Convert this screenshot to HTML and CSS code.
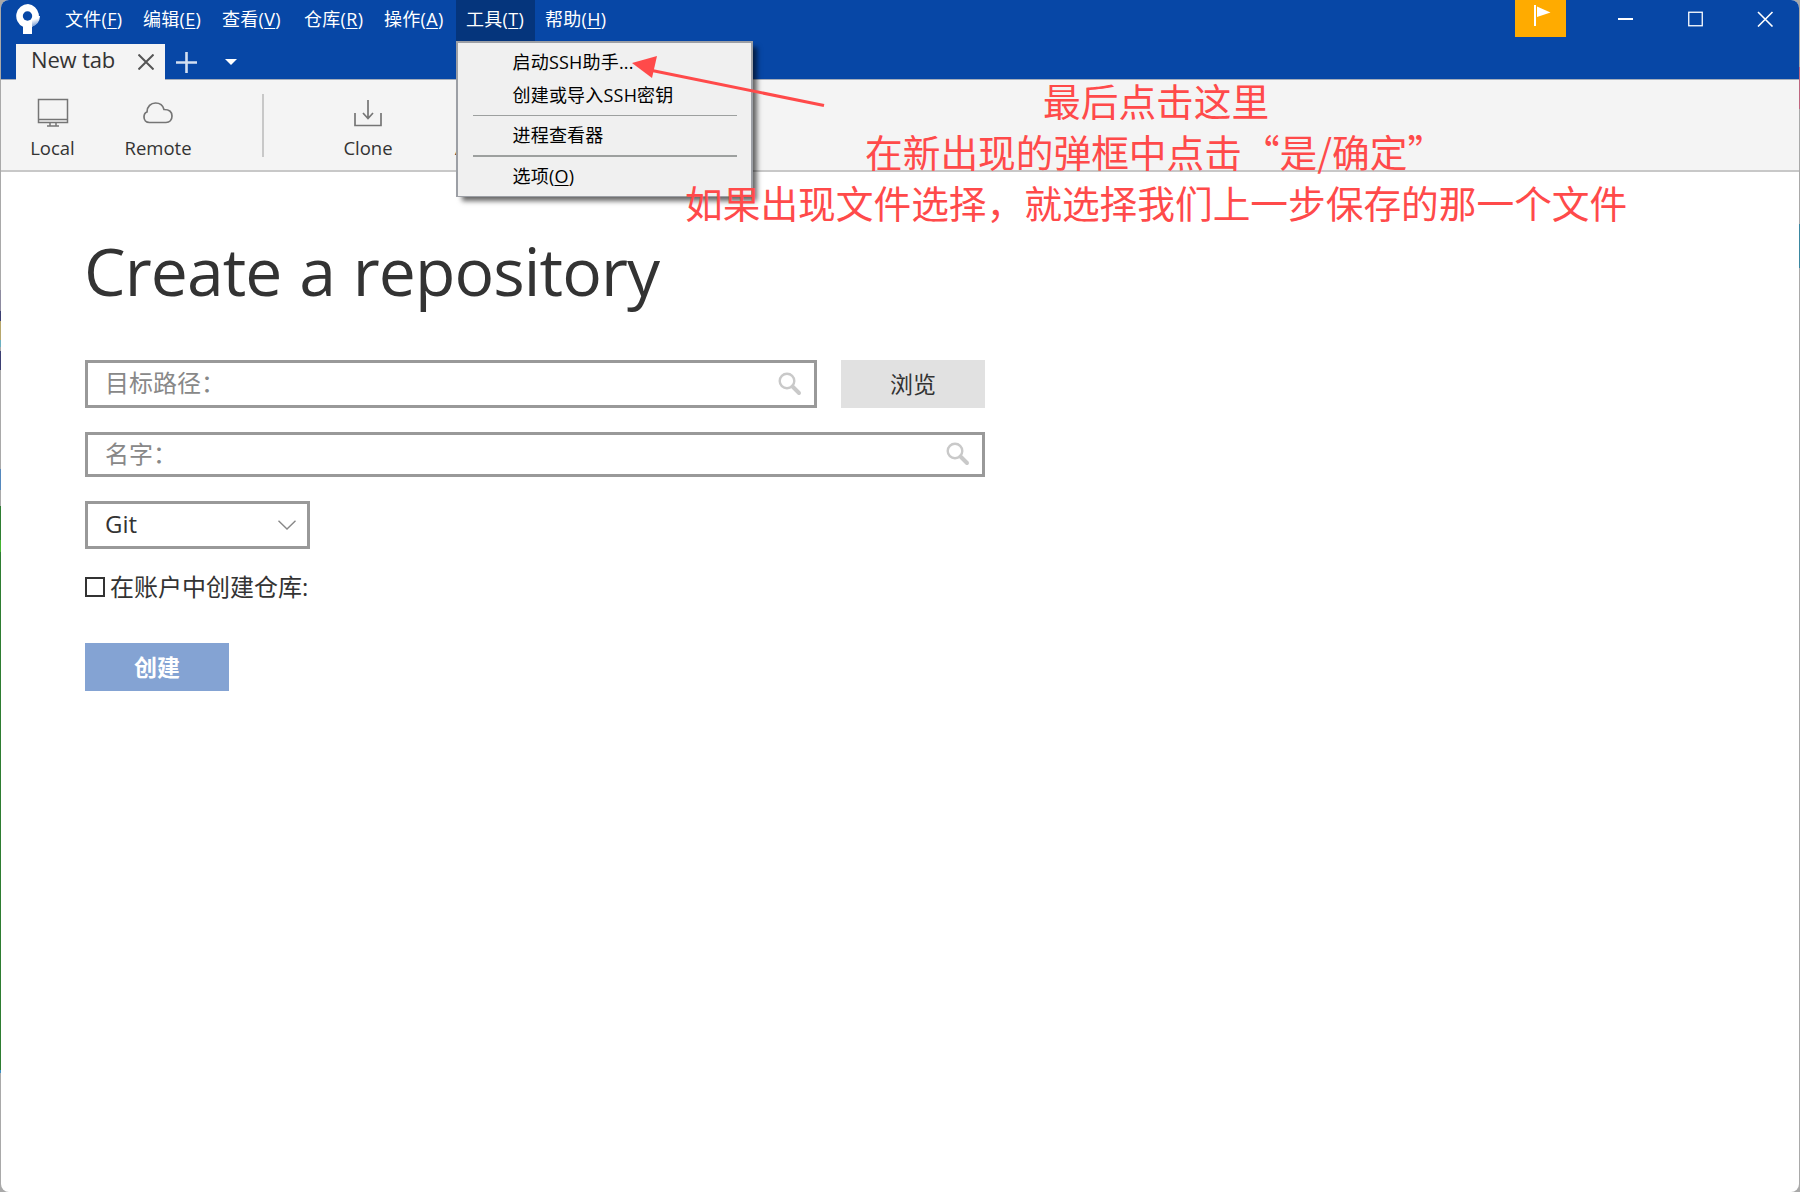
FILE: index.html
```html
<!DOCTYPE html>
<html lang="zh-CN">
<head>
<meta charset="utf-8">
<title>Sourcetree</title>
<link rel="stylesheet" href="styles.css">
</head>
<body>
<div class="window">
  <header class="titlebar">
    <div class="menubar">
      <svg class="logo" width="24" height="31" viewBox="0 0 24 31">
        <defs><linearGradient id="fade" x1="0.55" y1="0.3" x2="0.75" y2="0.9"><stop offset="0" stop-color="#fff"/><stop offset="1" stop-color="#6f97d2"/></linearGradient></defs>
        <path d="M12 0a12 12 0 0 0-5 22.800V30h9V22.800A12 12 0 0 0 12 0z" fill="#fff"/>
        <path d="M12 12h12a12 12 0 0 1-8 10.800V16z" fill="url(#fade)"/>
        <circle cx="11.500" cy="12" r="4.700" fill="#0747a6"/>
      </svg>
      <nav class="menus">
        <span class="menu m-file">文件(<u>F</u>)</span>
        <span class="menu m-edit">编辑(<u>E</u>)</span>
        <span class="menu m-view">查看(<u>V</u>)</span>
        <span class="menu m-repo">仓库(<u>R</u>)</span>
        <span class="menu m-act">操作(<u>A</u>)</span>
        <div class="menu m-tool open">工具(<u>T</u>)
          <div class="dropdown">
            <div class="item">启动SSH助手...</div>
            <div class="item">创建或导入SSH密钥</div>
            <div class="sep"></div>
            <div class="item">进程查看器</div>
            <div class="sep thick"></div>
            <div class="item">选项(<u>O</u>)</div>
          </div>
        </div>
        <span class="menu m-help">帮助(<u>H</u>)</span>
      </nav>
      <div class="flag">
        <svg width="17" height="22" viewBox="0 0 17 22"><path d="M0 1h2v21H0zM3 2.500L16.500 8.500 3 13z" fill="#fff"/></svg>
      </div>
      <svg class="controls" width="156" height="16" viewBox="0 0 156 16" fill="none" stroke="#fff">
        <path d="M0 8h15" stroke-width="2"/>
        <rect x="70.750" y="1.250" width="13.500" height="13.500" stroke-width="1.300"/>
        <path d="M140 1l14.500 14.500M154.500 1L140 15.500" stroke-width="1.600"/>
      </svg>
    </div>
    <div class="tabs">
      <div class="tab"><span>New tab</span>
        <svg width="16" height="16" viewBox="0 0 16 16"><path d="M0.500 0.500l15 15M15.500 0.500l-15 15" stroke="#555" stroke-width="2" fill="none"/></svg>
      </div>
      <svg class="plus" width="21" height="21" viewBox="0 0 21 21"><path d="M0 10.500h21M10.500 0v21" stroke="#d3dff1" stroke-width="2.600"/></svg>
      <svg class="caret" width="12" height="6" viewBox="0 0 12 6"><path d="M0 0h12L6 6z" fill="#fff"/></svg>
    </div>
  </header>
  <div class="toolbar">
    <div class="tool local">
      <svg width="32" height="30" viewBox="0 0 32 30" fill="none" stroke="#757575" stroke-width="1.500"><path d="M1.500 1.500h29v23h-29zM1.500 21.500h29M13 25v2.500M19 25v2.500M10 28h12"/></svg>
      <span>Local</span>
    </div>
    <div class="tool remote">
      <svg width="32" height="30" viewBox="0 0 32 30" fill="none" stroke="#757575" stroke-width="1.700"><path d="M7.500 24.500C4 24.500 2 22 2 19c0-3 1.500-4.500 3-5C5 8.500 9 5 13.500 5c4.500 0 7.500 2.500 8.500 6.500 5 0 8 2.500 8 6.500s-2.500 6.500-6 6.500z"/></svg>
      <span>Remote</span>
    </div>
    <div class="divider"></div>
    <div class="tool clone">
      <svg width="32" height="30" viewBox="0 0 32 30" fill="none" stroke="#757575" stroke-width="1.700"><path d="M3 15v12.500h26V15M16 2v18M11 15l5 5.500 5-5.500"/></svg>
      <span>Clone</span>
    </div>
    <div class="tool add"><span>Add</span></div>
  </div>
  <main class="page">
    <h1>Create a repository</h1>
    <div class="row">
      <div class="field path"><span>目标路径：</span>
        <svg width="24" height="24" viewBox="0 0 24 24" fill="none" stroke="#c9c9c9"><circle cx="9" cy="9" r="7.300" stroke-width="2.400"/><path d="M14.500 14.500l6.500 6.500" stroke-width="4" stroke-linecap="round"/></svg>
      </div>
      <div class="browse">浏览</div>
    </div>
    <div class="field name"><span>名字：</span>
      <svg width="24" height="24" viewBox="0 0 24 24" fill="none" stroke="#c9c9c9"><circle cx="9" cy="9" r="7.300" stroke-width="2.400"/><path d="M14.500 14.500l6.500 6.500" stroke-width="4" stroke-linecap="round"/></svg>
    </div>
    <div class="field kind"><span>Git</span>
      <svg width="18" height="10" viewBox="0 0 18 10"><path d="M0.500 0.800L9 9l8.500-8.200" fill="none" stroke="#888" stroke-width="1.400"/></svg>
    </div>
    <div class="check"><i class="box"></i><span>在账户中创建仓库:</span></div>
    <div class="create">创建</div>
  </main>
  <svg class="arrow" width="200" height="60" viewBox="0 0 200 60"><path d="M20 14.500L192 49.500" stroke="#ff4a4a" stroke-width="3"/><path d="M0 7L25 0 20 22z" fill="#ff4a4a"/></svg>
  <div class="notes">
    <p class="n1">最后点击这里</p>
    <p class="n2">在新出现的弹框中点击“是/确定”</p>
    <p class="n3">如果出现文件选择，就选择我们上一步保存的那一个文件</p>
  </div>
</div>
</body>
</html>
```
FILE: styles.css
```css
* { box-sizing: border-box; }
html, body { height: 100%; }
body {
  margin: 0;
  padding: 0 1px;
  /* slivers of the desktop visible on both sides of the window */
  background:
    linear-gradient(#a9a9a9 0 67px, #c0667f 67px 109px, #a9a9a9 109px 224px, #3a87a0 224px 268px, #a9a9a9 268px) right / 1px 100% no-repeat,
    linear-gradient(#a9a9a9 0 290px, #8d8ba0 290px 311px, #3b3f73 311px 321px, #b7a76c 321px 340px, #6ab0c0 340px 347px, #a9a9a9 347px 351px, #3b3f73 351px 370px, #a9a9a9 370px 469px, #5588bd 469px 490px, #a9a9a9 490px 506px, #2e7d32 506px 540px, #43b530 540px 552px, #2e7d32 552px 1070px, #3a8ec4 1070px 1073px, #a9a9a9 1073px);
  font-family: "Open Sans", "Noto Sans CJK SC", sans-serif;
  color: #333;
  overflow: hidden;
}
.window {
  position: relative;
  height: 1192px;
  background: #fff;
  border-radius: 8px;
}
.titlebar {
  height: 80px;
  background: #0747a6;
  border-bottom: 1px solid #a5adba;
  border-radius: 8px 8px 0 0;
}
.menubar { display: flex; height: 44px; align-items: flex-start; }
.logo { margin: 4px 0 0 15px; }
.menus { display: flex; margin-left: 15px; flex: 1; }
.menu {
  height: 41px;
  padding-left: 10px;
  line-height: 38px;
  font-size: 18px;
  color: #fff;
  white-space: nowrap;
  letter-spacing: 0.300px;
}
u { text-underline-offset: 2px; text-decoration-thickness: 1px; }
.m-file { width: 78px; }
.m-edit { width: 79px; }
.m-view { width: 82px; }
.m-repo { width: 80px; }
.m-act { width: 82px; }
.m-tool { width: 79px; position: relative; }
.m-help { width: 82px; }
.open { background: #05357c; }
.dropdown {
  position: absolute;
  z-index: 2;
  left: 0;
  top: 41px;
  width: 297px;
  height: 156px;
  padding: 4px 14px 0 15px;
  background: #f0f0f0;
  border: 2px solid #9c9fa5;
  border-width: 2px 2px 1px;
  box-shadow: 5px 5px 5px -1px rgba(0, 0, 0, .6);
  color: #000;
  letter-spacing: 0.200px;
}
.item { height: 33px; line-height: 30px; padding-left: 39.500px; }
.sep { height: 1px; margin: 2px 0 4px; background: #9da09f; }
.sep.thick { height: 2px; margin: 2px 0 4px; }
.flag {
  display: flex;
  width: 51px;
  height: 37px;
  padding: 4px 0 0 19px;
  background: #ffab00;
}
.controls { margin: 11px 25px 0 52px; }
.tabs { display: flex; height: 36px; padding-left: 15px; }
.tab {
  display: flex;
  width: 149px;
  height: 36px;
  padding: 0 11px 0 15px;
  justify-content: space-between;
  align-items: center;
  background: #f4f4f4;
  font-size: 22px;
}
.tab span { line-height: 30px; margin-top: -6px; letter-spacing: -0.150px; }
.plus { margin: 8px 0 0 11px; }
.caret { margin: 15px 0 0 28px; }
.toolbar {
  display: flex;
  height: 92px;
  background: #f4f4f4;
  border-bottom: 2px solid #c8c8c8;
}
.tool { display: flex; flex-direction: column; align-items: center; padding-top: 18px; font-size: 18.500px; }
.tool span { margin-top: 7px; line-height: 26px; }
.local { width: 103px; }
.remote { width: 108px; }
.divider { width: 2px; height: 63px; margin: 14px 0 0 50px; background: #c8c8c8; }
.clone { width: 208px; }
.add { padding-top: 48px; margin-left: -17px; }
.page { padding: 63px 0 0 84px; }
h1 { margin: 0 0 0 -1px; height: 125px; line-height: 70px; font-size: 66px; font-weight: 400; letter-spacing: -0.900px; word-spacing: 1.500px; }
.row { display: flex; gap: 24px; }
.field {
  display: flex;
  justify-content: space-between;
  align-items: center;
  height: 48px;
  padding: 0 12px 0 17px;
  border: 3px solid #999;
  font-size: 24px;
  color: #888;
}
.field span { line-height: 30px; margin-top: -2px; }
.path { width: 732px; }
.browse, .create { width: 144px; height: 48px; line-height: 48px; text-align: center; font-size: 23px; }
.browse { background: #e1e1e1; }
.name { width: 900px; height: 45px; margin-top: 24px; }
.name svg { margin-top: -1px; }
.kind { width: 225px; margin-top: 24px; color: #333; padding-right: 11px; }
.check { display: flex; align-items: center; height: 30px; margin-top: 24px; font-size: 24px; }
.check span { margin-top: -2px; line-height: 30px; }
.box { width: 20px; height: 20px; margin: -2px 5px 0 0; border: 2px solid #333; }
.create { margin-top: 40px; background: #84a3d3; color: #fff; font-weight: 700; }
.arrow { position: absolute; z-index: 3; left: 631px; top: 59px; }
.notes { position: absolute; z-index: 3; left: 684px; top: 74px; width: 945px; color: #ff4a4a; font: 400 37.700px/51px "Noto Sans CJK SC", sans-serif; white-space: nowrap; }
.arrow { top: 55.500px; }
.notes p { margin: 0; }
.n1 { padding-left: 358px; }
.n2 { padding-left: 180px; }
```
